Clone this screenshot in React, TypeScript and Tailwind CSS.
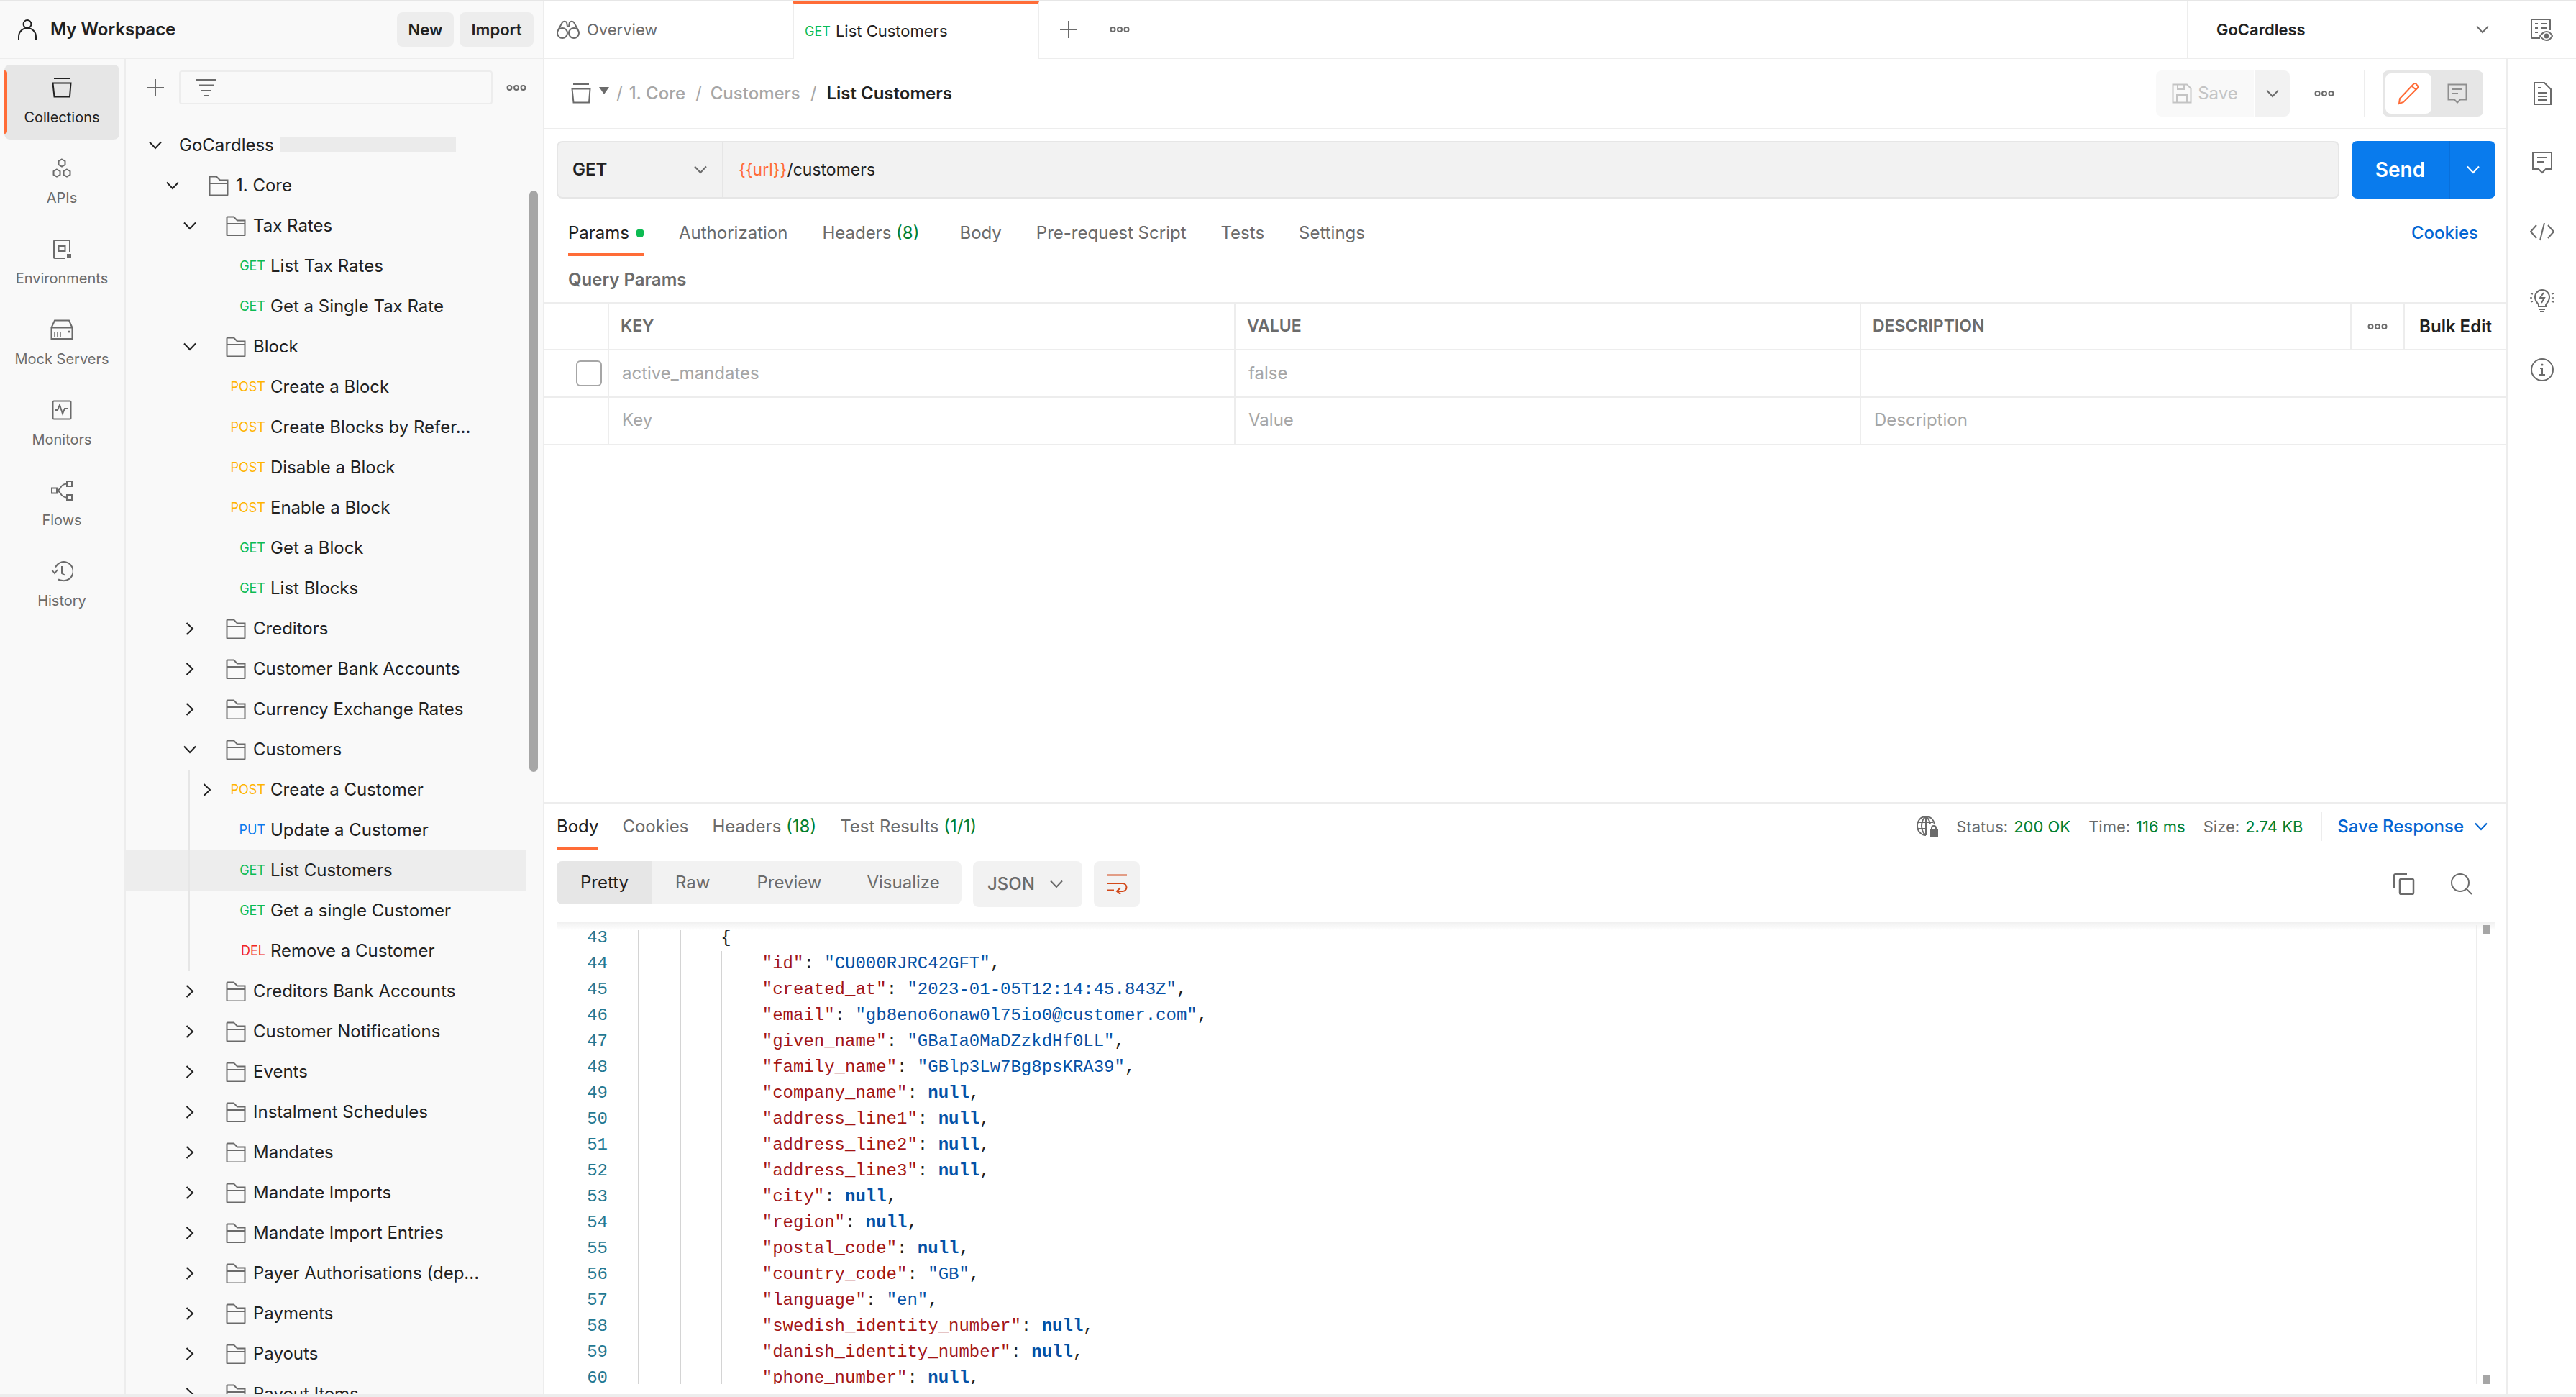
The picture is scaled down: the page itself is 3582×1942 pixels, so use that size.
import type { ReactNode } from 'react';

const Ico = ({ size = 28, className = '', vb, children }: { size?: number; className?: string; vb?: string; children: ReactNode }) => (
  <svg
    width={size}
    height={size}
    viewBox={vb || `0 0 ${size} ${size}`}
    fill="none"
    stroke="currentColor"
    strokeWidth={2}
    className={`shrink-0 ${className}`}
  >
    {children}
  </svg>
);

const ChevronDown = ({ className = 'text-[#212121]' }: { className?: string }) => (
  <svg width="20" height="12" viewBox="0 0 20 12" fill="none" stroke="currentColor" strokeWidth={2} className={`shrink-0 ${className}`}>
    <path d="M2 1.5 10 10l8-8.5" />
  </svg>
);

const ChevronRight = () => (
  <svg width="12" height="20" viewBox="0 0 12 20" fill="none" stroke="#212121" strokeWidth={2} className="shrink-0">
    <path d="M1.5 2 10 10l-8.5 8" />
  </svg>
);

const Dots = ({ className = 'text-[#6b6b6b]' }: { className?: string }) => (
  <svg width="28" height="10" viewBox="0 0 28 10" fill="none" stroke="currentColor" strokeWidth={2} className={`shrink-0 ${className}`}>
    <circle cx="4.5" cy="5" r="3" />
    <circle cx="14" cy="5" r="3" />
    <circle cx="23.5" cy="5" r="3" />
  </svg>
);

const Plus = () => (
  <svg width="26" height="26" viewBox="0 0 26 26" fill="none" stroke="#6b6b6b" strokeWidth={2} className="shrink-0">
    <path d="M13 1v24M1 13h24" />
  </svg>
);

const FolderIcon = () => (
  <Ico className="text-[#6b6b6b]">
    <path d="M1.5 25.5V2.5a1 1 0 0 1 1-1H11l5 5h10.5v20a1 1 0 0 1-1 1h-23a1 1 0 0 1-1-1z" />
    <path d="M1.5 11h25" />
  </Ico>
);

const CollectionsIcon = ({ size = 28, className = '' }: { size?: number; className?: string }) => (
  <Ico size={size} vb="0 0 28 28" className={className}>
    <path d="M3 1h22" />
    <path d="M1.5 7.5h25L25 26.5H3.5z" />
  </Ico>
);

const ApisIcon = () => (
  <Ico>
    <path d="M14 1.5l4.5 2.5v5L14 11.5 9.5 9V4z" />
    <path d="M7 15.5l4.5 2.5v5L7 25.5 2.5 23v-5z" />
    <path d="M21 15.5l4.5 2.5v5L21 25.5 16.5 23v-5z" />
  </Ico>
);

const EnvIcon = () => (
  <Ico>
    <path d="M25 19V3a1 1 0 0 0-1-1H4a1 1 0 0 0-1 1v23a1 1 0 0 0 1 1h15" />
    <rect x="9.5" y="10" width="9" height="7" />
    <rect x="21" y="21" width="6" height="6" fill="currentColor" stroke="none" />
  </Ico>
);

const MockIcon = () => (
  <Ico vb="0 0 32 28" size={32}>
    <path d="M1.5 11.5 6 1.5h20l4.5 10" />
    <path d="M1.5 11.5h29v15.5h-29z" />
    <path d="M6 18v6M10 18v6M14 18v6" strokeWidth={1.5} />
    <circle cx="26" cy="17" r="1.5" fill="currentColor" stroke="none" />
  </Ico>
);

const MonitorIcon = () => (
  <Ico>
    <rect x="1.5" y="1.5" width="25" height="25" rx="1.5" />
    <path d="M5 14h3l3-7 4 12 3-7h5" />
  </Ico>
);

const FlowsIcon = () => (
  <Ico vb="0 0 30 28" size={30}>
    <rect x="1" y="10.5" width="7" height="7" />
    <rect x="22" y="1" width="7" height="7" />
    <rect x="22" y="20" width="7" height="7" />
    <path d="M8 14c6 0 4-9.500 14-9.500M8 14c6 0 4 9.500 14 9.500" />
  </Ico>
);

const HistoryIcon = () => (
  <Ico vb="0 0 30 28" size={30}>
    <path d="M6 8.500A13 13 0 1 1 16 27c-2 0-4-.5-6-1.500" />
    <path d="M1 12l4 5 4-5" />
    <path d="M15 7v10l5 3" />
  </Ico>
);

const navItems = [
  { label: 'Collections', icon: <CollectionsIcon /> },
  { label: 'APIs', icon: <ApisIcon /> },
  { label: 'Environments', icon: <EnvIcon /> },
  { label: 'Mock Servers', icon: <MockIcon /> },
  { label: 'Monitors', icon: <MonitorIcon /> },
  { label: 'Flows', icon: <FlowsIcon /> },
  { label: 'History', icon: <HistoryIcon /> },
];

const depthPad = ['pl-[29px]', 'pl-[53px]', 'pl-[77px]', 'pl-[101px]'];

const methodColor: Record<string, string> = {
  GET: 'text-[#0cbb52]',
  POST: 'text-[#ffb400]',
  PUT: 'text-[#097bed]',
  DEL: 'text-[#f02525]',
};

const FolderRow = ({ name, depth, open }: { name: string; depth: number; open?: boolean }) => (
  <div className={`flex h-14 w-[557px] items-center ${depthPad[depth]}`}>
    <div className="flex w-6 justify-center">{open ? <ChevronDown /> : <ChevronRight />}</div>
    <div className="ml-[38px]">
      <FolderIcon />
    </div>
    <span className="ml-2.5 whitespace-nowrap text-[#212121]">{name}</span>
  </div>
);

const RequestRow = ({ method, name, chevron, active }: { method: string; name: string; chevron?: boolean; active?: boolean }) => (
  <div className={`flex h-14 w-[557px] items-center ${depthPad[3]} ${active ? 'bg-[#ededed]' : ''}`}>
    <div className="flex w-6 justify-center">{chevron && <ChevronRight />}</div>
    <span className={`w-[69px] text-right text-[18px] ${methodColor[method]}`}>{method}</span>
    <span className="ml-[7px] whitespace-nowrap text-[#212121]">{name}</span>
  </div>
);

const Sidebar = () => (
  <div className="flex w-[757px] shrink-0 border-r-2 border-[#ededed] bg-[#f9f9f9]">
    <div className="flex w-[175px] shrink-0 flex-col gap-2 border-r-2 border-[#ededed] pt-2">
      {navItems.map((item, i) => (
        <div
          key={item.label}
          className={`relative mx-[6px] flex h-[104px] w-[160px] flex-col items-center rounded-lg pt-[18px] ${
            i === 0 ? 'bg-[#e6e6e6] text-[#212121]' : 'text-[#6b6b6b]'
          }`}
        >
          {i === 0 && <div className="absolute left-0 top-2 h-[88px] w-1 rounded-r bg-[#ff6c37]" />}
          <div className="flex h-7 items-center justify-center">{item.icon}</div>
          <span className="mt-[13px] text-[20px] leading-7">{item.label}</span>
        </div>
      ))}
    </div>

    <div className="relative min-w-0 flex-1 overflow-hidden text-[24px] leading-8">
      <div className="absolute left-[561px] top-[183px] h-[808px] w-3 rounded-full bg-[#a6a6a6]" />
      <div className="flex h-[92px] items-start pl-[29px] pt-4">
        <div className="flex h-[47px] w-6 items-center justify-center">
          <Plus />
        </div>
        <div className="ml-[21px] flex h-[47px] w-[436px] items-center rounded border-2 border-[#ededed] pl-[22px]">
          <svg width="28" height="24" viewBox="0 0 28 24" fill="none" stroke="#6b6b6b" strokeWidth={2}>
            <path d="M0 1h28M4 8.500h20M7 16h14M10 23h8" />
          </svg>
        </div>
        <div className="ml-[19px] flex h-[47px] items-center">
          <Dots />
        </div>
      </div>

      <div className="flex h-14 w-[557px] items-center pl-[29px]">
        <div className="flex w-6 justify-center">
          <ChevronDown />
        </div>
        <span className="ml-[21px] text-[#212121]">GoCardless</span>
        <div className="ml-2 -mt-[3px] h-[21px] w-[245px] bg-[#ebebeb]" />
      </div>
      <FolderRow name="1. Core" depth={1} open />
      <FolderRow name="Tax Rates" depth={2} open />
      <RequestRow method="GET" name="List Tax Rates" />
      <RequestRow method="GET" name="Get a Single Tax Rate" />
      <FolderRow name="Block" depth={2} open />
      <RequestRow method="POST" name="Create a Block" />
      <RequestRow method="POST" name="Create Blocks by Refer..." />
      <RequestRow method="POST" name="Disable a Block" />
      <RequestRow method="POST" name="Enable a Block" />
      <RequestRow method="GET" name="Get a Block" />
      <RequestRow method="GET" name="List Blocks" />
      <FolderRow name="Creditors" depth={2} />
      <FolderRow name="Customer Bank Accounts" depth={2} />
      <FolderRow name="Currency Exchange Rates" depth={2} />
      <FolderRow name="Customers" depth={2} open />
      <div className="relative">
        <div className="absolute inset-y-0 left-[87px] w-0.5 bg-[#e6e6e6]" />
        <RequestRow method="POST" name="Create a Customer" chevron />
        <RequestRow method="PUT" name="Update a Customer" />
        <RequestRow method="GET" name="List Customers" active />
        <RequestRow method="GET" name="Get a single Customer" />
        <RequestRow method="DEL" name="Remove a Customer" />
      </div>
      <FolderRow name="Creditors Bank Accounts" depth={2} />
      <FolderRow name="Customer Notifications" depth={2} />
      <FolderRow name="Events" depth={2} />
      <FolderRow name="Instalment Schedules" depth={2} />
      <FolderRow name="Mandates" depth={2} />
      <FolderRow name="Mandate Imports" depth={2} />
      <FolderRow name="Mandate Import Entries" depth={2} />
      <FolderRow name="Payer Authorisations (dep..." depth={2} />
      <FolderRow name="Payments" depth={2} />
      <FolderRow name="Payouts" depth={2} />
      <FolderRow name="Payout Items" depth={2} />
    </div>
  </div>
);

const TopBar = () => (
  <div className="flex h-[80px] shrink-0 text-[22px]">
    <div className="flex w-[757px] shrink-0 items-center border-b-2 border-r-2 border-[#ededed] bg-[#f9f9f9]">
      <svg width="26" height="28" viewBox="0 0 26 28" fill="none" stroke="#212121" strokeWidth={2} className="ml-[25px] shrink-0">
        <circle cx="13" cy="6.500" r="5.500" />
        <path d="M1 28v-4a12 12 0 0 1 24 0v4" />
      </svg>
      <span className="ml-[19px] text-[24px] font-semibold text-[#212121]">My Workspace</span>
      <div className="ml-auto mr-[13px] flex gap-2">
        <div className="flex h-12 w-[79px] items-center justify-center rounded-lg bg-[#ededed] text-[22px] font-semibold text-[#212121]">New</div>
        <div className="flex h-12 w-[103px] items-center justify-center rounded-lg bg-[#ededed] text-[22px] font-semibold text-[#212121]">Import</div>
      </div>
    </div>

    <div className="flex w-[345px] shrink-0 items-center border-b-2 border-[#ededed] pl-[17px] text-[#6b6b6b]">
      <svg width="32" height="26" viewBox="0 0 32 26" fill="none" stroke="currentColor" strokeWidth={2} className="shrink-0">
        <circle cx="8" cy="18" r="7" />
        <circle cx="24" cy="18" r="7" />
        <path d="M2 14 8 3a4 4 0 0 1 6 0l1 6h2l1-6a4 4 0 0 1 6 0l6 11" />
      </svg>
      <span className="ml-[10px]">Overview</span>
    </div>
    <div className="flex w-[343px] shrink-0 items-center border-x-2 border-t-4 border-[#ededed] border-t-[#ff6c37] pb-[2px] pl-[15px]">
      <span className="text-[18px] text-[#0cbb52]">GET</span>
      <span className="ml-[7px] text-[#212121]">List Customers</span>
    </div>
    <div className="flex flex-1 items-center border-b-2 border-[#ededed] pl-[28px]">
      <Plus />
      <div className="ml-[44px]">
        <Dots />
      </div>
    </div>
    <div className="flex w-[444px] shrink-0 items-center border-b-2 border-l-2 border-[#ededed] pl-[39px]">
      <span className="font-semibold text-[#212121]">GoCardless</span>
      <div className="ml-auto mr-[23px]">
        <ChevronDown className="text-[#6b6b6b]" />
      </div>
    </div>
    <div className="flex w-[97px] shrink-0 items-center justify-center border-b-2 border-[#ededed] text-[#6b6b6b]">
      <svg width="32" height="32" viewBox="0 0 32 32" fill="none" stroke="currentColor" strokeWidth={2}>
        <path d="M14 28H3a1 1 0 0 1-1-1V3a1 1 0 0 1 1-1h24a1 1 0 0 1 1 1v14" />
        <path d="M7 8h4M15 8h9M7 14h4M15 14h9M7 20h4" />
        <path d="M14 25c3-4 6-6 9-6s6 2 8 6c-2 4-5 6-8 6s-6-2-9-6z" />
        <circle cx="23" cy="25" r="2.500" fill="currentColor" />
      </svg>
    </div>
  </div>
);

const BreadcrumbRow = () => (
  <div className="flex h-[98px] shrink-0 items-center border-b-2 border-[#ededed] text-[24px]">
    <div className="ml-[37px] text-[#6b6b6b]">
      <CollectionsIcon />
    </div>
    <div className="ml-[11px] mb-2 h-0 w-0 border-x-[7px] border-t-[10px] border-x-transparent border-t-[#6b6b6b]" />
    <span className="ml-[10px] text-[#a6a6a6]">/</span>
    <span className="ml-[9px] font-medium text-[#a6a6a6]">1. Core</span>
    <span className="ml-[14px] text-[#a6a6a6]">/</span>
    <span className="ml-[12px] font-medium text-[#a6a6a6]">Customers</span>
    <span className="ml-[14px] text-[#a6a6a6]">/</span>
    <span className="ml-[14px] font-semibold text-[#212121]">List Customers</span>

    <div className="ml-auto flex h-16 w-[136px] items-center justify-center gap-2 rounded-l-lg bg-[#f9f9f9] text-[#c4c4c4]">
      <svg width="28" height="28" viewBox="0 0 28 28" fill="none" stroke="currentColor" strokeWidth={2}>
        <path d="M1.500 1.500H21l5.500 5.500v19.500h-25z" />
        <path d="M8 1.500V8h9V1.500M7 26.500V16h14v10.500" />
      </svg>
      <span>Save</span>
    </div>
    <div className="ml-0.5 flex h-16 w-[48px] items-center justify-center rounded-r-lg bg-[#f2f2f2]">
      <ChevronDown className="text-[#6b6b6b]" />
    </div>
    <div className="ml-[34px]">
      <Dots />
    </div>
    <div className="ml-[41px] h-16 w-0.5 bg-[#ededed]" />
    <div className="ml-[24px] mr-[32px] flex h-16 w-[140px] items-center rounded-lg bg-[#e6e6e6] pl-1">
      <div className="flex h-14 w-16 items-center justify-center rounded-lg bg-white">
        <svg width="30" height="32" viewBox="0 0 30 32" fill="none" stroke="#ff6c37" strokeWidth={2}>
          <path d="M2 30l1-7L22 3a2.500 2.500 0 0 1 4 0l1.500 2a2.500 2.500 0 0 1 0 3.500L8 28z" />
          <path d="M20 6l6 5" />
        </svg>
      </div>
      <div className="flex flex-1 items-center justify-center text-[#8f8f8f]">
        <svg width="28" height="28" viewBox="0 0 28 28" fill="none" stroke="currentColor" strokeWidth={2}>
          <path d="M1.500 1.500h25v21H18l-4 4-4-4H1.500z" />
          <path d="M7 8h14M7 14h8" />
        </svg>
      </div>
    </div>
  </div>
);

const UrlRow = () => (
  <div className="mt-4 flex h-20 shrink-0 pl-[17px] pr-[15px] text-[24px]">
    <div className="flex flex-1 rounded-lg border-2 border-[#e6e6e6] bg-[#f2f2f2]">
      <div className="flex w-[230px] items-center border-r-2 border-[#e6e6e6] pl-5 font-semibold text-[#212121]">
        GET
        <div className="ml-auto mr-[20px]">
          <ChevronDown className="text-[#6b6b6b]" />
        </div>
      </div>
      <div className="flex items-center pl-[21px] text-[23px] text-[#212121]">
        <span className="text-[#ff6c37]">{'{{url}}'}</span>/customers
      </div>
    </div>
    <div className="ml-[17px] flex h-20 w-[200px] overflow-hidden rounded-lg bg-[#097bed] text-white">
      <div className="flex w-[135px] items-center justify-center text-[28px] font-semibold">Send</div>
      <div className="flex flex-1 items-center justify-center border-l-2 border-[#0870dc]">
        <ChevronDown className="text-white" />
      </div>
    </div>
  </div>
);

const RequestTabs = () => (
  <div className="mt-8 flex shrink-0 pl-[33px] pr-[39px] text-[24px] leading-8 text-[#6b6b6b]">
    <div className="relative">
      <div className="flex items-center text-[#212121]">
        Params
        <span className="ml-[9px] h-3 w-3 rounded-full bg-[#0cbb52]" />
      </div>
      <div className="mt-3 h-1 bg-[#ff6c37]" />
    </div>
    <span className="ml-12">Authorization</span>
    <span className="ml-12">
      Headers <span className="text-[#007f31]">(8)</span>
    </span>
    <span className="ml-14">Body</span>
    <span className="ml-12">Pre-request Script</span>
    <span className="ml-12">Tests</span>
    <span className="ml-12">Settings</span>
    <span className="ml-auto font-medium text-[#0265d2]">Cookies</span>
  </div>
);

const ParamsTable = () => (
  <div className="mt-[15px] shrink-0 border-t-2 border-[#ededed] text-[24px]">
    <div className="grid h-[65px] grid-cols-[90px_871px_870px_1fr] border-b-2 border-[#ededed]">
      <div className="border-r-2 border-[#ededed]" />
      <div className="flex items-center border-r-2 border-[#ededed] pl-4 text-[23px] font-semibold text-[#6b6b6b]">KEY</div>
      <div className="flex items-center border-r-2 border-[#ededed] pl-4 text-[23px] font-semibold text-[#6b6b6b]">VALUE</div>
      <div className="flex">
        <div className="flex w-[682px] items-center border-r-2 border-[#ededed] pl-4 text-[23px] font-semibold text-[#6b6b6b]">DESCRIPTION</div>
        <div className="flex w-[74px] items-center justify-center border-r-2 border-[#ededed]">
          <Dots />
        </div>
        <div className="flex flex-1 items-center justify-center font-semibold text-[#212121]">Bulk Edit</div>
      </div>
    </div>
    <div className="grid h-[66px] grid-cols-[90px_871px_870px_1fr] border-b-2 border-[#ededed] text-[#a6a6a6]">
      <div className="flex items-center justify-center border-r-2 border-[#ededed] pl-9">
        <div className="h-9 w-9 shrink-0 rounded-md border-2 border-[#a6a6a6]" />
      </div>
      <div className="flex items-center border-r-2 border-[#ededed] pl-[18px]">active_mandates</div>
      <div className="flex items-center border-r-2 border-[#ededed] pl-[18px]">false</div>
      <div />
    </div>
    <div className="grid h-[66px] grid-cols-[90px_871px_870px_1fr] border-b-2 border-[#ededed] text-[#a6a6a6]">
      <div className="border-r-2 border-[#ededed]" />
      <div className="flex items-center border-r-2 border-[#ededed] pb-[3px] pl-[18px]">Key</div>
      <div className="flex items-center border-r-2 border-[#ededed] pb-[3px] pl-[18px]">Value</div>
      <div className="flex items-center pb-[3px] pl-[18px]">Description</div>
    </div>
  </div>
);

type CodeLine = { key?: string; str?: string; isNull?: boolean };

const codeLines: CodeLine[] = [
  {},
  { key: 'id', str: 'CU000RJRC42GFT' },
  { key: 'created_at', str: '2023-01-05T12:14:45.843Z' },
  { key: 'email', str: 'gb8eno6onaw0l75io0@customer.com' },
  { key: 'given_name', str: 'GBaIa0MaDZzkdHf0LL' },
  { key: 'family_name', str: 'GBlp3Lw7Bg8psKRA39' },
  { key: 'company_name', isNull: true },
  { key: 'address_line1', isNull: true },
  { key: 'address_line2', isNull: true },
  { key: 'address_line3', isNull: true },
  { key: 'city', isNull: true },
  { key: 'region', isNull: true },
  { key: 'postal_code', isNull: true },
  { key: 'country_code', str: 'GB' },
  { key: 'language', str: 'en' },
  { key: 'swedish_identity_number', isNull: true },
  { key: 'danish_identity_number', isNull: true },
  { key: 'phone_number', isNull: true },
];

const Guide = () => <div className="h-9 w-[57.6px] shrink-0 border-l-2 border-[#d4d4d4]" />;

const CodePanel = () => (
  <div className="relative ml-[17px] mr-4 mt-5 flex h-[643px] overflow-hidden pt-[5px] [font-family:'Liberation_Mono',monospace] text-[24px] leading-9">
    <div className="absolute inset-x-0 top-0 h-3 bg-gradient-to-b from-[#efefef] to-white" />
    <div className="w-[113px] shrink-0 pr-[42px] text-right text-[#237893]">
      {codeLines.map((_, i) => (
        <div key={i} className="h-9">
          {i + 43}
        </div>
      ))}
    </div>
    <div className="min-w-0 flex-1">
      {codeLines.map((line, i) => (
        <div key={i} className="flex h-9 whitespace-pre">
          <Guide />
          <Guide />
          {line.key ? (
            <>
              <Guide />
              <span>
                <span className="text-[#a31515]">"{line.key}"</span>
                <span className="text-[#212121]">: </span>
                {line.isNull ? (
                  <span className="font-bold text-[#0451a5]">null</span>
                ) : (
                  <span className="text-[#0451a5]">"{line.str}"</span>
                )}
                <span className="text-[#212121]">,</span>
              </span>
            </>
          ) : (
            <span className="text-[#212121]">{'{'}</span>
          )}
        </div>
      ))}
    </div>
    <div className="relative w-[26px] shrink-0 border-l-2 border-[#ededed]">
      <div className="absolute left-2 top-0 h-3 w-2.5 bg-[#a6a6a6]" />
      <div className="absolute bottom-0 left-2 h-3 w-2.5 bg-[#a6a6a6]" />
    </div>
  </div>
);

const ResponsePane = () => (
  <div className="flex min-h-0 flex-1 flex-col border-t-2 border-[#ededed]">
    <div className="mt-4 flex h-12 shrink-0 items-start pl-[17px] pr-[25px] text-[24px] leading-8 text-[#6b6b6b]">
      <div>
        <span className="text-[#212121]">Body</span>
        <div className="mt-3 h-1 bg-[#ff6c37]" />
      </div>
      <span className="ml-[33px]">Cookies</span>
      <span className="ml-[33px]">
        Headers <span className="text-[#007f31]">(18)</span>
      </span>
      <span className="ml-[33px]">
        Test Results <span className="text-[#007f31]">(1/1)</span>
      </span>

      <div className="ml-auto flex h-8 items-center text-[22px]">
        <svg width="32" height="30" viewBox="0 0 32 30" fill="none" stroke="#6b6b6b" strokeWidth={2}>
          <path d="M14 27C7 27 2 21 2 14S7 1 14 1s11 5 12 11" />
          <path d="M14 1c-4 3-6 8-6 13s2 10 6 13M14 1c3 2 5 6 6 10M3 9h21M3 18h11M14 1v26" />
          <rect x="20" y="19" width="11" height="10" fill="#6b6b6b" stroke="none" />
          <path d="M22 19v-2a3 3 0 0 1 6 0v2" />
        </svg>
        <span className="ml-6">Status:</span>
        <span className="ml-[8px] text-[#007f31]">200 OK</span>
        <span className="ml-[25px]">Time:</span>
        <span className="ml-[8px] text-[#007f31]">116 ms</span>
        <span className="ml-[25px]">Size:</span>
        <span className="ml-[8px] text-[#007f31]">2.74 KB</span>
        <div className="ml-[25px] h-10 w-0.5 bg-[#ededed]" />
        <span className="ml-[21px] text-[24px] font-medium text-[#0265d2]">Save Response</span>
        <div className="ml-[14px]">
          <ChevronDown className="text-[#0265d2]" />
        </div>
      </div>
    </div>

    <div className="mt-4 flex h-16 shrink-0 items-start pl-[17px] pr-[47px] text-[24px] text-[#6b6b6b]">
      <div className="flex h-[60px] w-[563px] items-center overflow-hidden rounded-lg bg-[#f2f2f2]">
        <div className="flex h-full w-[133px] items-center justify-center bg-[#e6e6e6] text-[#212121]">Pretty</div>
        <span className="ml-8">Raw</span>
        <span className="ml-[65px]">Preview</span>
        <span className="ml-[63px]">Visualize</span>
      </div>
      <div className="ml-4 flex h-16 w-[152px] items-center rounded-lg bg-[#f2f2f2] pl-5 font-medium">
        JSON
        <div className="ml-auto mr-[26px]">
          <ChevronDown className="text-[#6b6b6b]" />
        </div>
      </div>
      <div className="ml-4 flex h-16 w-16 items-center justify-center rounded-lg bg-[#f2f2f2]">
        <svg width="30" height="28" viewBox="0 0 30 28" fill="none" stroke="#d2491a" strokeWidth={2}>
          <path d="M1 1.500h28M1 13h22a4.500 4.500 0 0 1 0 11h-7M1 22.500h10" />
          <path d="M20 19l-5 5 5 4" />
        </svg>
      </div>
      <div className="ml-auto flex h-16 items-center gap-[50px]">
        <svg width="30" height="30" viewBox="0 0 30 30" fill="none" stroke="#6b6b6b" strokeWidth={2}>
          <path d="M19 1H3a2 2 0 0 0-2 2v17" />
          <rect x="9" y="8" width="19" height="21" rx="2" strokeWidth={2.500} />
        </svg>
        <svg width="30" height="30" viewBox="0 0 30 30" fill="none" stroke="#6b6b6b" strokeWidth={2}>
          <circle cx="13" cy="13" r="12" />
          <path d="M21.500 21.500 29 29" />
        </svg>
      </div>
    </div>

    <CodePanel />
  </div>
);

const railIcons = [
  <svg key="doc" width="26" height="32" viewBox="0 0 26 32" fill="none" stroke="currentColor" strokeWidth={2}>
    <path d="M2 1h14l9 9v21H2z" />
    <path d="M7 8h4M7 15h13M7 20h13M7 25h13" />
  </svg>,
  <svg key="comment" width="30" height="32" viewBox="0 0 30 32" fill="none" stroke="currentColor" strokeWidth={2}>
    <path d="M2 2h26v23h-8l-5 5-5-5H2z" />
    <path d="M8 9h14M8 15h9" />
  </svg>,
  <svg key="code" width="34" height="26" viewBox="0 0 34 26" fill="none" stroke="currentColor" strokeWidth={2}>
    <path d="M9 4 1 13l8 9M25 4l8 9-8 9M20 1l-6 24" />
  </svg>,
  <svg key="bulb" width="34" height="32" viewBox="0 0 34 32" fill="none" stroke="currentColor" strokeWidth={2}>
    <path d="M12 24v-2c0-2-5-4-5-11a10 10 0 0 1 20 0c0 7-5 9-5 11v2z" />
    <path d="M13 28h8M14 31h6M19 5l-5 7h6l-4 7" />
    <path d="M1 6l3 1M0 12h3M1 18l3-1M33 6l-3 1M34 12h-3M33 18l-3-1" strokeWidth={1.500} />
  </svg>,
  <svg key="info" width="32" height="32" viewBox="0 0 32 32" fill="none" stroke="currentColor" strokeWidth={2}>
    <circle cx="16" cy="16" r="15" />
    <path d="M13 14h3v9M12 23h8" />
    <circle cx="16" cy="9" r="1.500" fill="currentColor" stroke="none" />
  </svg>,
];

export default function App() {
  return (
    <div className="flex h-[1942px] w-[3582px] flex-col overflow-hidden bg-white [font-family:Inter,sans-serif]">
      <div className="h-0.5 shrink-0 bg-[#e6e6e6]" />
      <TopBar />
      <div className="flex min-h-0 flex-1">
        <Sidebar />
        <div className="flex min-w-0 flex-1 flex-col">
          <div className="flex h-[1033px] shrink-0 flex-col">
            <BreadcrumbRow />
            <UrlRow />
            <RequestTabs />
            <div className="ml-[33px] mt-[17px] h-8 shrink-0 text-[24px] font-semibold leading-8 text-[#6b6b6b]">Query Params</div>
            <ParamsTable />
          </div>
          <ResponsePane />
        </div>
        <div className="flex w-[97px] shrink-0 flex-col border-l-2 border-[#ededed] text-[#6b6b6b]">
          {railIcons.map((icon) => (
            <div key={icon.key} className="flex h-24 items-center justify-center">
              {icon}
            </div>
          ))}
        </div>
      </div>
      <div className="h-1 shrink-0 bg-[#ededed]" />
    </div>
  );
}
